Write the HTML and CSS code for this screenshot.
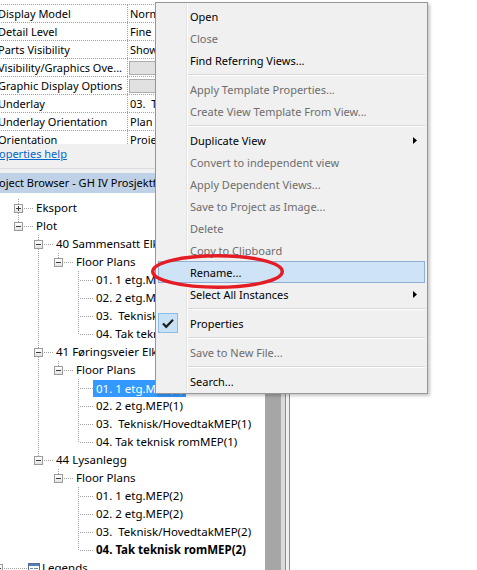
FILE: index.html
```html
<!DOCTYPE html>
<html>
<head>
<meta charset="utf-8">
<title>Project Browser context menu</title>
<link rel="stylesheet" href="styles.css">
</head>
<body>
<div class="screen">
  <div class="app">
    <div class="props">
      <div class="ptable">
        <div class="prow"><div class="pl">Display Model</div><div class="pv">Normal</div></div>
        <div class="prow"><div class="pl">Detail Level</div><div class="pv">Fine</div></div>
        <div class="prow"><div class="pl">Parts Visibility</div><div class="pv">Show Original</div></div>
        <div class="prow"><div class="pl">Visibility/Graphics Ove...</div><div class="pv b"><div class="btn"></div></div></div>
        <div class="prow"><div class="pl">Graphic Display Options</div><div class="pv b"><div class="btn"></div></div></div>
        <div class="prow"><div class="pl">Underlay</div><div class="pv">03.  Teknisk/Hovedtak</div></div>
        <div class="prow"><div class="pl">Underlay Orientation</div><div class="pv">Plan</div></div>
        <div class="prow"><div class="pl">Orientation</div><div class="pv">Project North</div></div>
      </div>
    </div>
    <div class="help"><a href="#">Properties help</a></div>
    <div class="title">Project Browser - GH IV Prosjektfase</div>
    <div class="browser">
      <div class="tree">
        <div class="row"><div class="g v"></div><div class="c t"><span class="box plus"></span></div><span class="tx">Eksport</span></div>
        <div class="row"><div class="g v"></div><div class="c l"><span class="box"></span></div><span class="tx">Plot</span></div>

        <div class="row"><div class="g v"></div><div class="g"></div><div class="c t"><span class="box"></span></div><span class="tx">40 Sammensatt Elkraft</span></div>
        <div class="row"><div class="g v"></div><div class="g"></div><div class="g v"></div><div class="c l"><span class="box"></span></div><span class="tx">Floor Plans</span></div>
        <div class="row"><div class="g v"></div><div class="g"></div><div class="g v"></div><div class="g"></div><div class="c t"></div><span class="tx">01. 1 etg.MEP</span></div>
        <div class="row"><div class="g v"></div><div class="g"></div><div class="g v"></div><div class="g"></div><div class="c t"></div><span class="tx">02. 2 etg.MEP</span></div>
        <div class="row"><div class="g v"></div><div class="g"></div><div class="g v"></div><div class="g"></div><div class="c t"></div><span class="tx">03.  Teknisk/HovedtakMEP</span></div>
        <div class="row"><div class="g v"></div><div class="g"></div><div class="g v"></div><div class="g"></div><div class="c l"></div><span class="tx">04. Tak teknisk romMEP</span></div>

        <div class="row"><div class="g v"></div><div class="g"></div><div class="c t"><span class="box"></span></div><span class="tx">41 Føringsveier Elkraft</span></div>
        <div class="row"><div class="g v"></div><div class="g"></div><div class="g v"></div><div class="c l"><span class="box"></span></div><span class="tx">Floor Plans</span></div>
        <div class="row"><div class="g v"></div><div class="g"></div><div class="g v"></div><div class="g"></div><div class="c t"></div><span class="tx sel">01. 1 etg.MEP(1)</span></div>
        <div class="row"><div class="g v"></div><div class="g"></div><div class="g v"></div><div class="g"></div><div class="c t"></div><span class="tx">02. 2 etg.MEP(1)</span></div>
        <div class="row"><div class="g v"></div><div class="g"></div><div class="g v"></div><div class="g"></div><div class="c t"></div><span class="tx">03.  Teknisk/HovedtakMEP(1)</span></div>
        <div class="row"><div class="g v"></div><div class="g"></div><div class="g v"></div><div class="g"></div><div class="c l"></div><span class="tx">04. Tak teknisk romMEP(1)</span></div>

        <div class="row"><div class="g v"></div><div class="g"></div><div class="c l"><span class="box"></span></div><span class="tx">44 Lysanlegg</span></div>
        <div class="row"><div class="g v"></div><div class="g"></div><div class="g"></div><div class="c l"><span class="box"></span></div><span class="tx">Floor Plans</span></div>
        <div class="row"><div class="g v"></div><div class="g"></div><div class="g"></div><div class="g"></div><div class="c t"></div><span class="tx">01. 1 etg.MEP(2)</span></div>
        <div class="row"><div class="g v"></div><div class="g"></div><div class="g"></div><div class="g"></div><div class="c t"></div><span class="tx">02. 2 etg.MEP(2)</span></div>
        <div class="row"><div class="g v"></div><div class="g"></div><div class="g"></div><div class="g"></div><div class="c t"></div><span class="tx">03.  Teknisk/HovedtakMEP(2)</span></div>
        <div class="row"><div class="g v"></div><div class="g"></div><div class="g"></div><div class="g"></div><div class="c l"></div><span class="tx bold">04. Tak teknisk romMEP(2)</span></div>

        <div class="row"><div class="c t root"><span class="box plus"></span></div>
          <svg class="legicon" width="12" height="11" viewBox="0 0 12 11"><rect x="0.5" y="0.5" width="11" height="10" fill="#fff" stroke="#5b6f8c"/><rect x="1" y="1" width="10" height="2" fill="#4f7fc0"/><path d="M2 5.5h3M2 7.5h3M6 5.5h4M6 7.5h4" stroke="#6a86b0"/></svg>
          <span class="tx leg">Legends</span></div>
      </div>
      <div class="vscroll"></div>
      <div class="frame"></div>
    </div>
  </div>

  <div class="menu">
    <div class="mi"><span class="ic"></span><span class="lb">Open</span></div>
    <div class="mi dis"><span class="ic"></span><span class="lb">Close</span></div>
    <div class="mi"><span class="ic"></span><span class="lb">Find Referring Views...</span></div>
    <div class="sep"></div>
    <div class="mi dis"><span class="ic"></span><span class="lb">Apply Template Properties...</span></div>
    <div class="mi dis"><span class="ic"></span><span class="lb">Create View Template From View...</span></div>
    <div class="sep"></div>
    <div class="mi"><span class="ic"></span><span class="lb">Duplicate View</span><svg class="arr" width="4" height="7" viewBox="0 0 4 7"><path d="M0 0L4 3.5L0 7z" fill="#000"/></svg></div>
    <div class="mi dis"><span class="ic"></span><span class="lb">Convert to independent view</span></div>
    <div class="mi dis"><span class="ic"></span><span class="lb">Apply Dependent Views...</span></div>
    <div class="mi dis"><span class="ic"></span><span class="lb">Save to Project as Image...</span></div>
    <div class="mi dis"><span class="ic"></span><span class="lb">Delete</span></div>
    <div class="mi dis"><span class="ic"></span><span class="lb">Copy to Clipboard</span></div>
    <div class="mi hl"><span class="ic"></span><span class="lb">Rename...</span></div>
    <div class="mi"><span class="ic"></span><span class="lb">Select All Instances</span><svg class="arr" width="4" height="7" viewBox="0 0 4 7"><path d="M0 0L4 3.5L0 7z" fill="#000"/></svg></div>
    <div class="sep"></div>
    <div class="mi"><span class="ic"><span class="chk"><svg width="12" height="11" viewBox="0 0 12 11"><path d="M1 5.5L4.2 8.8L11 1.8" fill="none" stroke="#1e1e1e" stroke-width="2.2"/></svg></span></span><span class="lb">Properties</span></div>
    <div class="sep"></div>
    <div class="mi dis"><span class="ic"></span><span class="lb">Save to New File...</span></div>
    <div class="sep"></div>
    <div class="mi"><span class="ic"></span><span class="lb">Search...</span></div>
  </div>

  <svg class="mark" width="140" height="44" viewBox="0 0 140 44"><ellipse cx="69.5" cy="21.5" rx="64.75" ry="15.75" fill="none" stroke="#e41c23" stroke-width="3.5"/></svg>
</div>
</body>
</html>
```

FILE: styles.css
```css
* { box-sizing: border-box; }
html, body { margin: 0; padding: 0; }
body {
  width: 477px;
  height: 570px;
  overflow: hidden;
  background: #fff;
  font-family: "Noto Sans", "Open Sans", sans-serif;
  font-size: 11px;
  color: #000;
}
.screen { position: relative; width: 477px; height: 570px; overflow: hidden; }

/* application window (left part, scrolled off-screen on the left) */
.app {
  width: 302px;
  height: 570px;
  margin-left: -12px;
  display: flex;
  flex-direction: column;
  background: #f0f0f0;
}

/* properties grid */
.props { height: 144px; flex: none; overflow: hidden; background: #fff; padding-top: 4px; }
.ptable { border-top: 1px dotted #a0a0a0; }
.prow { display: flex; height: 18px; border-bottom: 1px dotted #a0a0a0; }
.pl {
  width: 140px; flex: none;
  padding-left: 10px;
  border-right: 1px dotted #a0a0a0;
  line-height: 17px;
  white-space: pre; overflow: hidden;
}
.pv { flex: 1; padding-left: 2px; line-height: 17px; white-space: pre; overflow: hidden; }
.pv.b { padding-left: 0; }
.btn { margin: 2px 0 0 1px; height: 14px; width: 180px; background: #e1e1e1; border: 1px solid #adadad; }

.help { height: 25px; flex: none; padding-top: 2px; line-height: 16px; border-bottom: 1px solid #dcdcdc; margin-bottom: 4px; }
.help a { color: #0066cc; text-decoration: underline; }

.title {
  height: 20px; flex: none;
  line-height: 20px;
  background: #bfd1e6;
  padding-left: 0;
  white-space: nowrap; overflow: hidden;
}

/* browser tree */
.browser { flex: 1; display: flex; min-height: 0; }
.tree { flex: 1; background: #fff; padding-top: 6px; overflow: hidden; font-size: 11.5px; }
.vscroll { width: 16px; flex: none; background: #a6a6a6; }
.frame {
  width: 9px; flex: none;
  background: linear-gradient(to right, #dadada 0 4px, #8e8e8e 4px 5px, #f0f0f0 5px 8px, #8e8e8e 8px 9px);
}

.row { display: flex; height: 18px; align-items: flex-start; white-space: pre; }
.g { width: 20px; height: 18px; flex: none; }
.g.v {
  background: repeating-linear-gradient(to bottom, #a0a0a0 0 1px, transparent 1px 2px) 10px 0 / 1px 18px no-repeat;
}
.c { width: 25px; height: 18px; flex: none; padding: 5px 0 0 6px; }
.c.t {
  background:
    repeating-linear-gradient(to bottom, #a0a0a0 0 1px, transparent 1px 2px) 10px 0 / 1px 18px no-repeat,
    repeating-linear-gradient(to right, #a0a0a0 0 1px, transparent 1px 2px) 12px 9px / 13px 1px no-repeat;
}
.c.l {
  background:
    repeating-linear-gradient(to bottom, #a0a0a0 0 1px, transparent 1px 2px) 10px 0 / 1px 9px no-repeat,
    repeating-linear-gradient(to right, #a0a0a0 0 1px, transparent 1px 2px) 12px 9px / 13px 1px no-repeat;
}
.c.root { width: 40px; }
.c.root.t {
  background:
    repeating-linear-gradient(to bottom, #a0a0a0 0 1px, transparent 1px 2px) 10px 0 / 1px 18px no-repeat,
    repeating-linear-gradient(to right, #a0a0a0 0 1px, transparent 1px 2px) 12px 9px / 28px 1px no-repeat;
}
.box {
  display: block;
  width: 9px; height: 9px;
  border: 1px solid #9a9a9a;
  background:
    linear-gradient(#3c3c3c, #3c3c3c) 1px 3px / 5px 1px no-repeat,
    linear-gradient(#ffffff, #e3e3e3);
}
.box.plus {
  background:
    linear-gradient(#3c3c3c, #3c3c3c) 1px 3px / 5px 1px no-repeat,
    linear-gradient(#3c3c3c, #3c3c3c) 3px 1px / 1px 5px no-repeat,
    linear-gradient(#ffffff, #e3e3e3);
}
.tx { padding: 0 3px; line-height: 17px; height: 17px; }
.tx.sel { background: #3399ff; color: #fff; margin-top: 1px; }
.tx.bold { font-weight: bold; }
.legicon { flex: none; margin-top: 4px; }
.tx.leg { padding-left: 2px; }

/* context menu (floats over the app) */
.menu {
  position: absolute;
  left: 155px;
  top: 2px;
  width: 273px;
  padding: 2px 2px 1px;
  border: 1px solid #979797;
  background:
    linear-gradient(to right, transparent 30px, #e2e3e3 30px 31px, #ffffff 31px 32px, transparent 32px),
    #f0f0f0;
  box-shadow: 2px 2px 3px rgba(0, 0, 0, 0.22);
}
.mi { display: flex; align-items: center; height: 22px; padding-right: 8px; white-space: nowrap; }
.mi .ic { width: 32px; height: 22px; flex: none; display: flex; align-items: center; }
.mi .lb { flex: 1; }
.mi.dis { color: #6d6d6d; }
.mi.hl { background: #cfe3f6; border: 1px solid #8fb0d4; padding-right: 7px; }
.mi.hl .ic { width: 31px; }
.arr { flex: none; }
.chk {
  width: 20px; height: 20px;
  background: #c8e1f5;
  border: 1px solid #8cbde6;
  display: flex; align-items: center; justify-content: center;
}
.sep {
  height: 7px;
  margin-left: 30px;
  background:
    linear-gradient(#d7d7d7, #d7d7d7) 0 3px / 100% 1px no-repeat,
    linear-gradient(#ffffff, #ffffff) 0 4px / 100% 1px no-repeat;
}

/* red annotation ring drawn over the screenshot */
.mark { position: absolute; left: 148px; top: 250px; }
```
